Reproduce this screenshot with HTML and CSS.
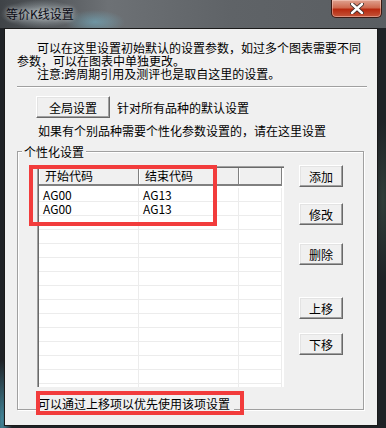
FILE: index.html
```html
<!DOCTYPE html>
<html lang="zh-CN">
<head>
  <meta charset="UTF-8" />
  <title>等价K线设置</title>
  <link rel="stylesheet" href="styles.css">
</head>
<body>
  <div class="window">
    <div class="titlebar">
      <span class="title">等价K线设置</span>
      <button class="close">
        <svg width="14" height="11" viewBox="0 0 14 11">
          <path d="M2 1 L12 10 M12 1 L2 10" stroke="#3a2a28" stroke-width="4.2" stroke-linecap="round"/>
          <path d="M2 1 L12 10 M12 1 L2 10" stroke="#fff" stroke-width="2.4" stroke-linecap="round"/>
        </svg>
      </button>
    </div>

    <div class="client">
      <div class="intro">
        <p class="first">可以在这里设置初始默认的设置参数，如过多个图表需要不同<br>参数，可以在图表中单独更改。</p>
        <p class="note">注意:跨周期引用及测评也是取自这里的设置。</p>
      </div>
      <div class="sep"></div>

      <div class="global-row">
        <button class="btn global-btn">全局设置</button>
        <span>针对所有品种的默认设置</span>
      </div>
      <p class="hint">如果有个别品种需要个性化参数设置的，请在这里设置</p>

      <div class="group">
        <span class="group-title">个性化设置</span>
        <div class="group-body">
          <div class="list">
            <div class="list-head">
              <div class="hcell">开始代码</div>
              <div class="hcell">结束代码</div>
              <div class="hcell"></div>
            </div>
            <div class="list-body" id="listBody"></div>
          </div>
          <div class="side-btns">
            <button class="btn side">添加</button>
            <button class="btn side gap-a">修改</button>
            <button class="btn side gap-b">删除</button>
            <button class="btn side gap-c">上移</button>
            <button class="btn side gap-d">下移</button>
          </div>
        </div>
        <p class="tip">可以通过上移项以优先使用该项设置</p>

        <div class="mark mark-list"></div>
        <div class="mark mark-tip"></div>
      </div>
    </div>
  </div>

  <script>
    const rows = [["AG00", "AG13"], ["AG00", "AG13"]];
    const body = document.getElementById("listBody");
    for (let i = 0; i < 15; i++) {
      const r = rows[i] || ["", ""];
      body.innerHTML += `
        <div class="row">
          <div class="cell">${r[0]}</div>
          <div class="cell">${r[1]}</div>
          <div class="cell"></div>
        </div>
      `;
    }
  </script>
</body>
</html>
```

FILE: styles.css
```css
* { box-sizing: border-box; }
body {
  margin: 0;
  width: 386px;
  height: 428px;
  overflow: hidden;
  font-family: "Noto Sans CJK SC", "Noto Sans", sans-serif;
  font-size: 12px;
  color: #000;
  background:
    radial-gradient(ellipse 10px 60px at 2px 420px, rgba(90, 200, 230, 0.6), transparent),
    radial-gradient(ellipse 10px 80px at 383px 200px, rgba(60, 80, 70, 0.6), transparent),
    #1f2226;
}
.window {
  height: 428px;
  display: flex;
  flex-direction: column;
}
.titlebar {
  height: 28px;
  display: flex;
  align-items: flex-start;
  background:
    radial-gradient(ellipse 40px 14px at 40px 14px, rgba(220, 235, 240, 0.55), transparent),
    radial-gradient(ellipse 30px 12px at 95px 22px, rgba(120, 200, 225, 0.45), transparent),
    linear-gradient(to right, #3f4347, #6d7175 28%, #5f6367 60%, #5a5e62);
}
.title {
  margin: 6px 0 0 6px;
  line-height: 16px;
  color: #0a0a14;
  text-shadow: 0 0 5px rgba(255, 255, 255, 0.7);
}
.close {
  margin: 0 4px 0 auto;
  width: 51px;
  height: 18px;
  padding: 0;
  display: flex;
  align-items: center;
  justify-content: center;
  border: 1px solid #3a1a14;
  border-top: none;
  border-radius: 0 0 5px 5px;
  background: linear-gradient(#dfa290, #cf6a50 45%, #b8290f 55%, #c4553a);
  box-shadow: inset 0 0 0 1px rgba(255, 220, 210, 0.45);
}
.client {
  margin: 0 8px 0 4px;
  height: 398px;
  border: 1px solid #1a1a1a;
  background: #f0f0f0;
  padding-left: 12px;
}
.intro { margin-top: 12px; }
.intro p {
  margin: 0;
  line-height: 13px;
}
.first { text-indent: 20px; }
.note { padding-left: 20px; }
.sep {
  margin-top: 6px;
  width: 350px;
  height: 2px;
  border-top: 1px solid #a0a0a0;
  border-bottom: 1px solid #fff;
}
.btn {
  font-family: inherit;
  font-size: 12px;
  color: #000;
  padding: 0;
  background: #f0f0f0;
  border: 1px solid;
  border-color: #fff #696969 #696969 #fff;
  box-shadow: inset -1px -1px 0 #a0a0a0, inset 1px 1px 0 #e3e3e3;
  line-height: 13px;
}
.global-row {
  margin-top: 8px;
  display: flex;
  align-items: center;
  gap: 7px;
  padding-left: 19px;
  line-height: 13px;
}
.global-btn {
  width: 74px;
  height: 22px;
}
.hint {
  margin: 6px 0 0 21px;
  line-height: 13px;
}
.group {
  position: relative;
  margin-top: 14px;
  width: 347px;
  height: 259px;
  border: 1px solid #a0a0a0;
  box-shadow: 1px 1px 0 #fff, inset 1px 1px 0 #fff;
  display: flex;
  flex-direction: column;
  align-items: flex-start;
}
.group-title {
  margin: -7px 0 0 4px;
  padding: 0 2px;
  line-height: 13px;
  background: #f0f0f0;
}
.group-body {
  margin-top: 7px;
  display: flex;
  gap: 15px;
  padding-left: 19px;
}
.list {
  margin-top: 1px;
  width: 247px;
  height: 221px;
  overflow: hidden;
  background: #fff;
  border-left: 1px solid #a0a0a0;
  border-top: 1px solid #a0a0a0;
  box-shadow: inset 1px 1px 0 #696969;
  padding: 1px 2px 0 1px;
}
.list-head {
  display: grid;
  grid-template-columns: 100px 100px 1fr;
  height: 18px;
}
.hcell {
  background: #f0f0f0;
  border-right: 1px solid #808080;
  border-bottom: 2px solid #808080;
  box-shadow: inset 1px 0 0 #fff;
  padding-left: 6px;
  line-height: 16px;
}
.list-body { padding-top: 2px; }
.row {
  display: grid;
  grid-template-columns: 100px 100px 1fr;
  height: 14px;
  border-bottom: 1px solid #ececec;
}
.cell {
  border-right: 1px solid #ececec;
  padding-left: 4px;
  line-height: 13px;
}
.side-btns {
  display: flex;
  flex-direction: column;
}
.side {
  width: 44px;
  height: 22px;
}
.gap-a { margin-top: 16px; }
.gap-b { margin-top: 18px; }
.gap-c { margin-top: 32px; }
.gap-d { margin-top: 14px; }
.tip {
  margin: 10px 0 0 20px;
  padding-right: 4px;
  line-height: 14px;
  background: #f0f0f0;
}
.mark {
  position: absolute;
  border: 4px solid #f23c3c;
}
.mark-list {
  left: 11px;
  top: 13px;
  width: 188px;
  height: 61px;
}
.mark-tip {
  left: 18px;
  top: 239px;
  width: 208px;
  height: 24px;
}
```
